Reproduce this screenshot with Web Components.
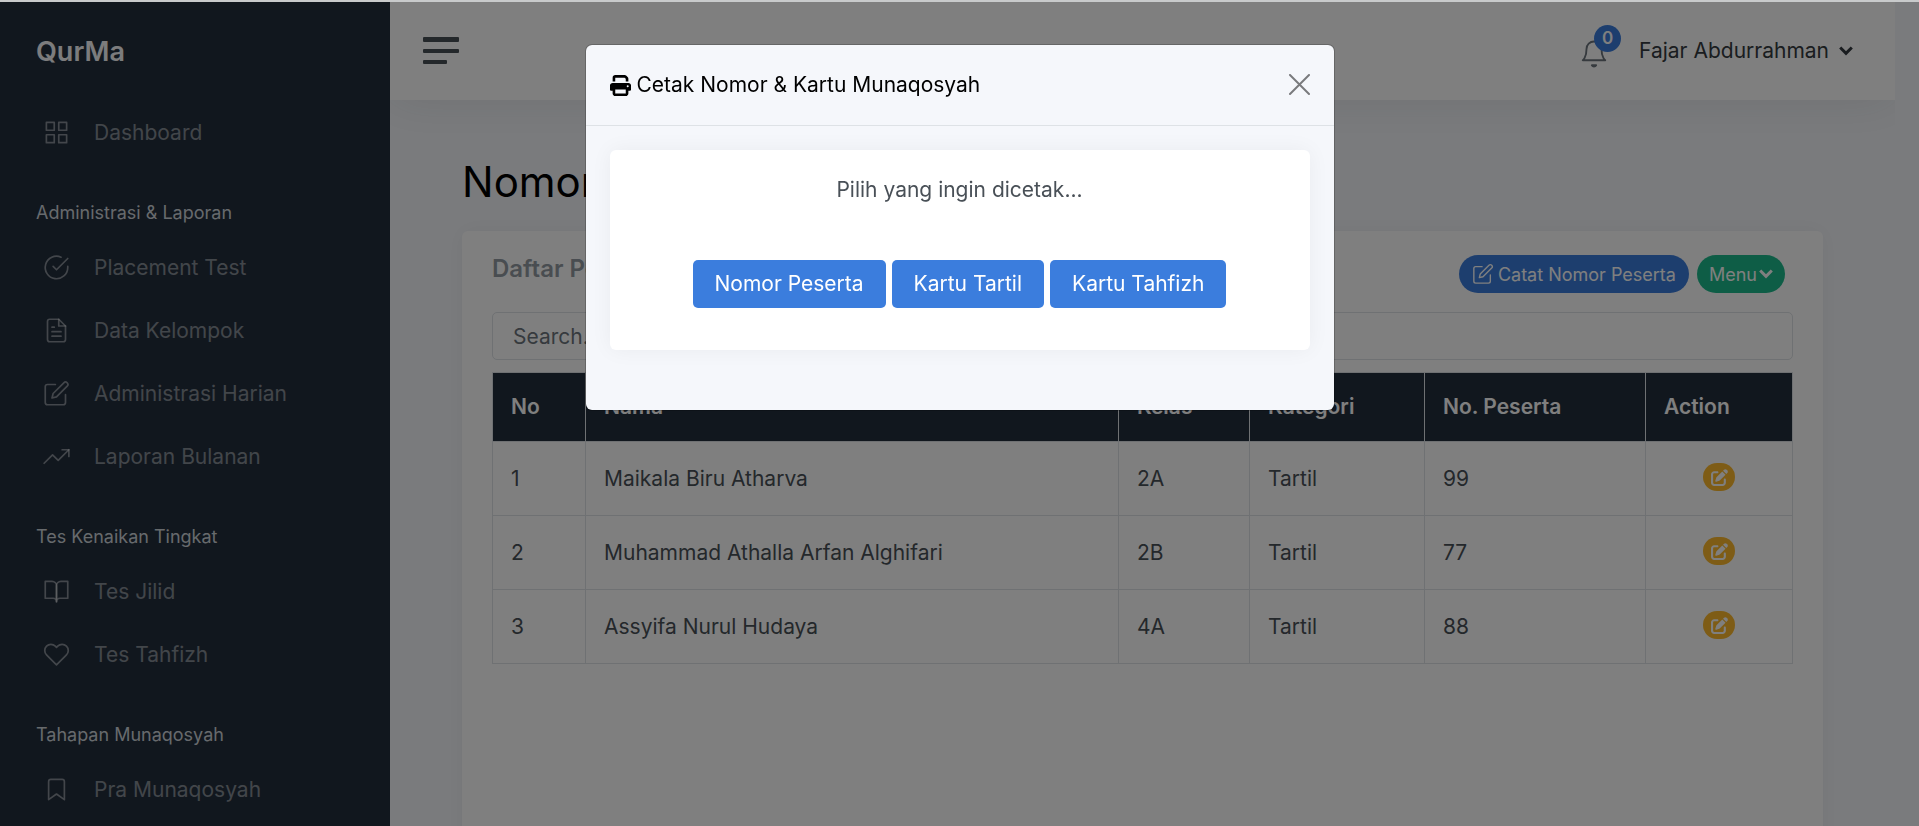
<!DOCTYPE html>
<html lang="id">
<head>
<meta charset="utf-8">
<meta name="viewport" content="width=device-width, initial-scale=1">
<title>QurMa</title>
<style>
  :root {
    --primary: #3b7ddd;
    --success: #1cbb8c;
    --warning: #fcb92c;
    --dark: #222e3c;
    --page: #f5f7fb;
    --line: #dee2e6;
    --text: #495057;
    --muted: #6c757d;
    --bar-shadow: 0 0 48px 0 rgba(33, 37, 41, .1);
    --card-shadow: 0 0 21px 0 rgba(33, 37, 41, .05);
  }
  html { height: 100%; }
  body {
    box-sizing: border-box;
    height: 100%;
    margin: 0;
    border-top: 2px solid #c8cacb;
    overflow: hidden;
    background: var(--page);
    color: var(--text);
    font: 400 21px/32px Inter, "Liberation Sans", sans-serif;
  }
</style>
</head>
<body>
<page-shell>
  <side-bar slot="sidebar">
    <side-link icon="grid">Dashboard</side-link>
    <side-heading>Administrasi &amp; Laporan</side-heading>
    <side-link icon="check-circle">Placement Test</side-link>
    <side-link icon="file-text">Data Kelompok</side-link>
    <side-link icon="edit">Administrasi Harian</side-link>
    <side-link icon="trending-up">Laporan Bulanan</side-link>
    <side-heading>Tes Kenaikan Tingkat</side-heading>
    <side-link icon="book-open">Tes Jilid</side-link>
    <side-link icon="heart">Tes Tahfizh</side-link>
    <side-heading>Tahapan Munaqosyah</side-heading>
    <side-link icon="bookmark">Pra Munaqosyah</side-link>
  </side-bar>
  <top-bar user="Fajar Abdurrahman" count="0"></top-bar>
  <page-content heading="Nomor Peserta">
    <peserta-card></peserta-card>
  </page-content>
</page-shell>
<print-modal>
  <span slot="title">Cetak Nomor &amp; Kartu Munaqosyah</span>
  <span slot="message">Pilih yang ingin dicetak...</span>
  <primary-button>Nomor Peserta</primary-button>
  <primary-button>Kartu Tartil</primary-button>
  <primary-button>Kartu Tahfizh</primary-button>
</print-modal>

<script>
const ICONS = {
  'grid': '<rect x="3" y="3" width="7" height="7"/><rect x="14" y="3" width="7" height="7"/><rect x="14" y="14" width="7" height="7"/><rect x="3" y="14" width="7" height="7"/>',
  'check-circle': '<path d="M22 11.08V12a10 10 0 1 1-5.93-9.14"/><path d="M22 4 12 14.01l-3-3"/>',
  'file-text': '<path d="M14 2H6a2 2 0 0 0-2 2v16a2 2 0 0 0 2 2h12a2 2 0 0 0 2-2V8z"/><path d="M14 2v6h6M16 13H8M16 17H8M10 9H8"/>',
  'edit': '<path d="M11 4H4a2 2 0 0 0-2 2v14a2 2 0 0 0 2 2h14a2 2 0 0 0 2-2v-7"/><path d="M18.5 2.5a2.121 2.121 0 0 1 3 3L12 15l-4 1 1-4z"/>',
  'trending-up': '<path d="M23 6 13.5 15.5l-5-5L1 18"/><path d="M17 6h6v6"/>',
  'book-open': '<path d="M2 3h6a4 4 0 0 1 4 4v14a3 3 0 0 0-3-3H2z"/><path d="M22 3h-6a4 4 0 0 0-4 4v14a3 3 0 0 1 3-3h7z"/>',
  'heart': '<path d="M20.84 4.61a5.5 5.5 0 0 0-7.78 0L12 5.67l-1.06-1.06a5.5 5.5 0 0 0-7.78 7.78l1.06 1.06L12 21.23l7.78-7.78 1.06-1.06a5.5 5.5 0 0 0 0-7.78z"/>',
  'bookmark': '<path d="M19 21l-7-5-7 5V5a2 2 0 0 1 2-2h10a2 2 0 0 1 2 2z"/>',
  'bell': '<path d="M18 8A6 6 0 0 0 6 8c0 7-3 9-3 9h18s-3-2-3-9"/><path d="M13.73 21a2 2 0 0 1-3.46 0z"/>'
};
const SOLID = {
  'print': '<path d="M128 0C92.7 0 64 28.7 64 64v96h64V64H354.7L384 93.3V160h64V93.3c0-17-6.7-33.3-18.7-45.3L400 18.7C388 6.7 371.7 0 354.7 0H128zM384 352v32 64H128V384 368 352H384zm64 32h32c17.7 0 32-14.3 32-32V256c0-35.3-28.7-64-64-64H64c-35.3 0-64 28.7-64 64v96c0 17.7 14.3 32 32 32H64v64c0 35.3 28.7 64 64 64H384c35.3 0 64-28.7 64-64V384zM432 248a24 24 0 1 1 0 48 24 24 0 1 1 0-48z"/>',
  'pen': '<path d="M471.6 21.7c-21.9-21.9-57.3-21.9-79.2 0L362.3 51.7l97.9 97.9 30.1-30.1c21.9-21.9 21.9-57.3 0-79.2L471.6 21.7zm-299.2 220c-6.1 6.1-10.8 13.6-13.5 21.9l-29.6 88.8c-2.9 8.6-.6 18.1 5.8 24.6s15.9 8.7 24.6 5.8l88.8-29.6c8.2-2.7 15.7-7.4 21.9-13.5L437.7 172.3 339.7 74.3 172.4 241.7zM96 64C43 64 0 107 0 160V416c0 53 43 96 96 96H352c53 0 96-43 96-96V320c0-17.7-14.3-32-32-32s-32 14.3-32 32v96c0 17.7-14.3 32-32 32H96c-17.7 0-32-14.3-32-32V160c0-17.7 14.3-32 32-32h96c17.7 0 32-14.3 32-32s-14.3-32-32-32H96z"/>'
};
const CHEVRON = '<svg width="14" height="10" viewBox="0 0 14 10" fill="none" stroke="currentColor" stroke-width="3" aria-hidden="true"><path d="M1.2 1.5 7 7.3l5.8-5.8"/></svg>';

function define(name, html, setup) {
  customElements.define(name, class extends HTMLElement {
    constructor() {
      super();
      const t = document.createElement('template');
      t.innerHTML = '<style>*{box-sizing:border-box}a{color:inherit;text-decoration:none}button,input{font:inherit;margin:0}button{cursor:pointer}svg{display:block}</style>' + html;
      this.attachShadow({ mode: 'open' }).append(t.content.cloneNode(true));
    }
    connectedCallback() { if (setup) setup(this, this.shadowRoot); }
  });
}

define('ui-icon', `<style>
  :host { display: block; flex: none; width: var(--size, 27px); height: var(--size, 27px); }
  span { display: block; width: 100%; height: 100%; }
  svg { width: 100%; height: 100%; }
</style><span></span>`, (el, root) => {
  const name = el.getAttribute('name');
  root.querySelector('span').innerHTML = SOLID[name]
    ? `<svg viewBox="0 0 512 512" fill="currentColor" aria-hidden="true">${SOLID[name]}</svg>`
    : `<svg viewBox="0 0 24 24" fill="none" stroke="currentColor" stroke-width="1.5" stroke-linecap="round" stroke-linejoin="round" aria-hidden="true">${ICONS[name] || ''}</svg>`;
});

define('page-shell', `<style>
  :host { display: grid; grid-template-columns: 390px minmax(0, 1fr); height: 100%; padding-right: 24px; box-sizing: border-box; }
  main { overflow: hidden; }
</style>
<slot name="sidebar"></slot>
<main><slot></slot></main>`);

define('side-bar', `<style>
  :host { display: block; overflow: hidden; background: var(--dark); }
  .brand { display: block; padding: 30px 36px 29px; color: #f8f9fa; font-size: 27px; line-height: 40px; font-weight: 600; }
</style>
<nav><a class="brand" href="#">QurMa</a><slot></slot></nav>`);

define('side-heading', `<style>
  :host { display: block; padding: 35px 36px 10px; color: #ced4da; font-size: 18px; line-height: 27px; }
</style><slot></slot>`);

define('side-link', `<style>
  :host { display: block; }
  a { display: flex; align-items: center; gap: 24px; padding: 15px 43px; line-height: 33px; color: rgba(233, 236, 239, .5); }
</style><a href="#"><span class="icon"></span><slot></slot></a>`, (el, root) => {
  root.querySelector('.icon').innerHTML = `<ui-icon name="${el.getAttribute('icon')}"></ui-icon>`;
});

define('top-bar', `<style>
  :host { display: flex; align-items: center; justify-content: space-between; height: 98px; padding: 0 42px 0 33px; box-sizing: border-box; background: #fff; box-shadow: var(--bar-shadow); }
  button { display: block; padding: 0; border: 0; background: none; color: inherit; }
  .right { display: flex; align-items: center; gap: 30px; }
  .bell { position: relative; --size: 30px; color: var(--muted); margin-top: 6px; }
  .badge { position: absolute; left: 15px; top: -14px; width: 27px; height: 27px; border-radius: 50%; background: var(--primary); color: #fff; font-size: 17px; line-height: 27px; font-weight: 600; text-align: center; }
  .user { display: flex; align-items: center; gap: 10px; color: #343a40; }
</style>
<button aria-label="Menu samping"><svg width="36" height="28" viewBox="0 0 36 28" fill="#495057" aria-hidden="true"><rect width="36" height="5" rx="1"/><rect y="12" width="36" height="4" rx="1"/><rect y="23" width="24" height="4" rx="1"/></svg></button>
<div class="right">
  <button class="bell" aria-label="Notifikasi"><ui-icon name="bell"></ui-icon><span class="badge"></span></button>
  <a class="user" href="#"><span class="name"></span>${CHEVRON}</a>
</div>`, (el, root) => {
  root.querySelector('.badge').textContent = el.getAttribute('count');
  root.querySelector('.name').textContent = el.getAttribute('user');
});

define('page-content', `<style>
  :host { display: block; padding: 57px 72px 36px; }
  h1 { margin: 0 0 24px; color: #000; font-size: 42px; line-height: 50px; font-weight: 400; }
</style><h1></h1><slot></slot>`, (el, root) => {
  root.querySelector('h1').textContent = el.getAttribute('heading');
});

const ROWS = [
  ['1', 'Maikala Biru Atharva', '2A', 'Tartil', '99'],
  ['2', 'Muhammad Athalla Arfan Alghifari', '2B', 'Tartil', '77'],
  ['3', 'Assyifa Nurul Hudaya', '4A', 'Tartil', '88']
];
define('peserta-card', `<style>
  :host { display: block; min-height: 100vh; padding: 24px 30px; box-sizing: border-box; border-radius: 6px; background: #fff; box-shadow: var(--card-shadow); }
  header { display: flex; align-items: flex-start; justify-content: space-between; margin-bottom: 19px; padding-right: 8px; }
  h2 { margin: 0; color: #939ba2; font-size: 24px; line-height: 28px; font-weight: 600; }
  .actions { display: flex; gap: 8px; }
  .pill { display: flex; align-items: center; height: 38px; padding: 0 13px; border: 0; border-radius: 19px; color: #fff; background: var(--primary); font-size: 18px; line-height: 27px; --size: 22px; gap: 4px; }
  .menu { background: var(--success); padding: 0 12px; gap: 2px; }
  input { display: block; width: 100%; height: 48px; padding: 0 20px; border: 1px solid var(--line); border-radius: 5px; background: #fff; color: var(--text); }
  input::placeholder { color: var(--muted); opacity: 1; }
  table { width: 100%; margin-top: 12px; border-collapse: collapse; table-layout: fixed; }
  th, td { padding: 0 18px; border: 1px solid var(--line); text-align: left; font-weight: 400; }
  th { height: 69px; background: var(--dark); color: #fff; font-weight: 600; }
  td { height: 74px; }
  .no { width: 93px; } .kelas { width: 131px; } .kategori { width: 175px; } .peserta { width: 221px; } .action { width: 147px; }
  .edit { display: flex; align-items: center; justify-content: center; width: 32px; height: 28px; margin: 0 auto 3px; padding: 0; border: 0; border-radius: 14px; background: var(--warning); color: #fff; --size: 17px; }
</style>
<header>
  <h2>Daftar Peserta</h2>
  <div class="actions">
    <button class="pill"><ui-icon name="edit"></ui-icon>Catat Nomor Peserta</button>
    <button class="pill menu">Menu${CHEVRON}</button>
  </div>
</header>
<input type="text" placeholder="Search..." aria-label="Search">
<table>
  <thead><tr><th class="no">No</th><th>Nama</th><th class="kelas">Kelas</th><th class="kategori">Kategori</th><th class="peserta">No. Peserta</th><th class="action">Action</th></tr></thead>
  <tbody>${ROWS.map(r => '<tr>' + r.map(c => `<td>${c}</td>`).join('') + '<td><button class="edit" aria-label="Edit"><ui-icon name="pen"></ui-icon></button></td></tr>').join('')}</tbody>
</table>`);

define('primary-button', `<style>
  :host { display: block; }
  button { display: block; height: 48px; padding: 0 22px; border: 0; border-radius: 5px; background: var(--primary); color: #fff; line-height: 32px; }
</style><button><slot></slot></button>`);

define('print-modal', `<style>
  :host { display: block; position: fixed; inset: 2px 0 0; background: rgba(0, 0, 0, .5); }
  .dialog { max-width: 750px; margin: 42px auto; border: 1px solid rgba(0, 0, 0, .2); border-radius: 7px; background: var(--page); background-clip: padding-box; overflow: hidden; }
  header { display: flex; align-items: center; justify-content: space-between; padding: 24px; border-bottom: 1px solid var(--line); }
  h2 { display: flex; align-items: center; gap: 6px; margin: 0; color: #000; font-size: 21px; line-height: 32px; font-weight: 400; --size: 21px; }
  .close { display: block; padding: 0; border: 0; background: none; color: #000; opacity: .5; }
  .body { padding: 24px 24px 60px; }
  .panel { padding: 24px 30px 42px; border-radius: 6px; background: #fff; box-shadow: var(--card-shadow); text-align: center; }
  p { margin: 0 0 54px; }
  .choices { display: flex; justify-content: center; gap: 6px; }
</style>
<div class="dialog" role="dialog" aria-modal="true" aria-labelledby="title">
  <header>
    <h2 id="title"><ui-icon name="print"></ui-icon><slot name="title"></slot></h2>
    <button class="close" aria-label="Tutup"><svg width="22" height="22" viewBox="0 0 22 22" aria-hidden="true"><path d="M2 1l19 19M21 1 2 20" stroke="currentColor" stroke-width="2" stroke-linecap="round"/></svg></button>
  </header>
  <div class="body"><div class="panel">
    <p><slot name="message"></slot></p>
    <div class="choices"><slot></slot></div>
  </div></div>
</div>`);
</script>
</body>
</html>
